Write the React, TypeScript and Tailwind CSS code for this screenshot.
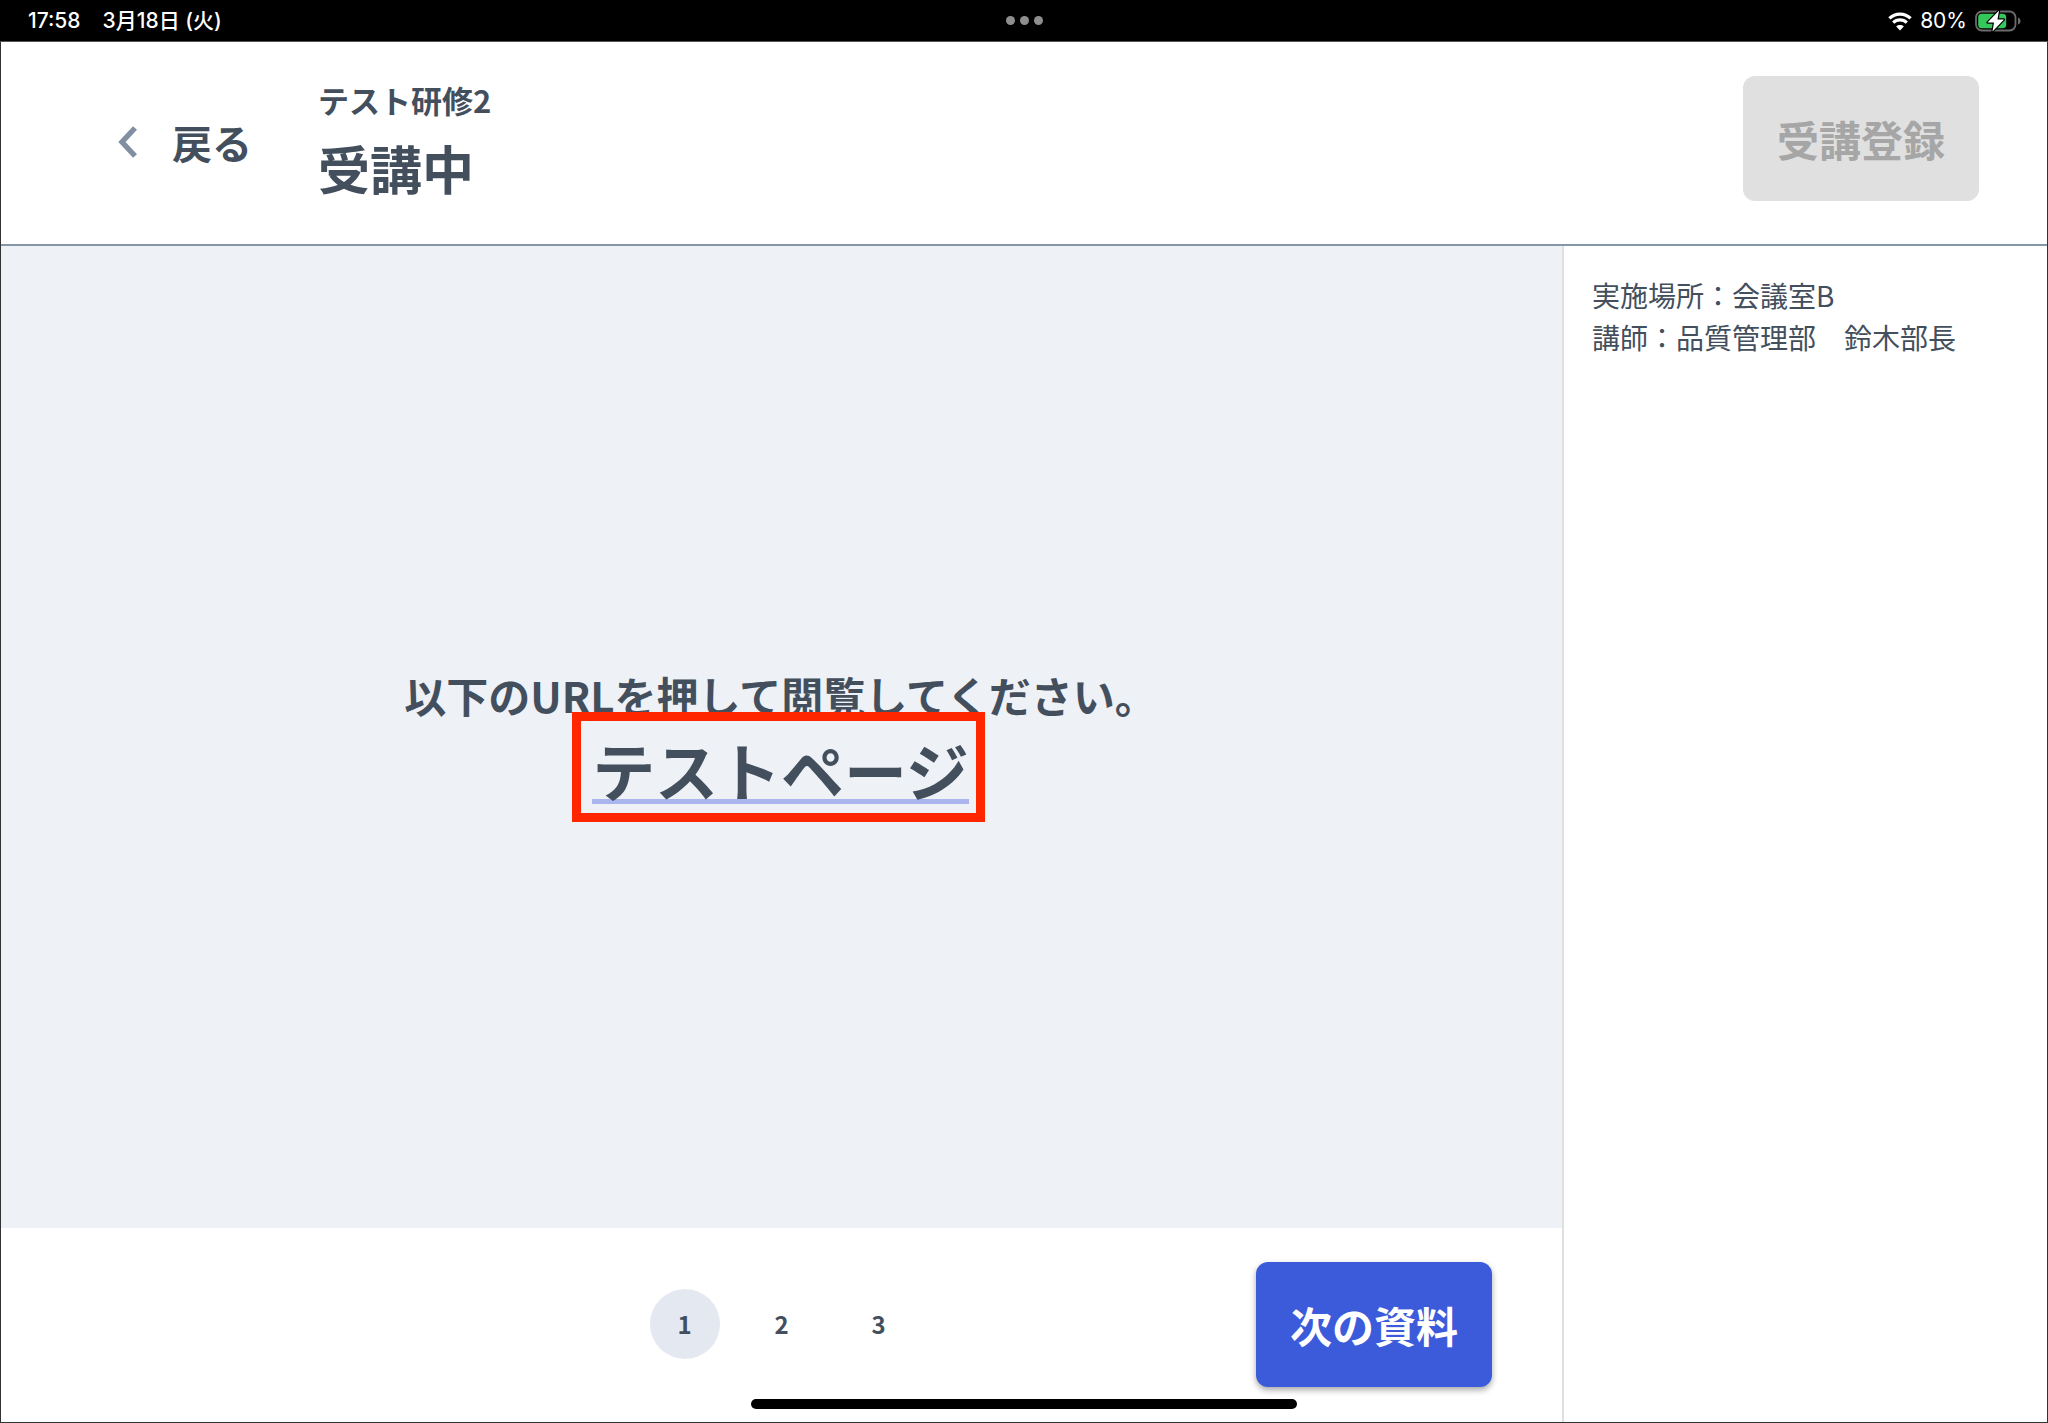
const PAGES = [1, 2, 3];
const CURRENT_PAGE = 1;

const WifiIcon = () => (
    <svg className="h-5 w-6" viewBox="0 0 24 20" fill="none" aria-hidden="true">
        <path d="M1.4 7.4C7.2 1.7 16.8 1.7 22.6 7.4" stroke="#fff" strokeWidth="3.2" />
        <path d="M5.2 11.6C9 8 15 8 18.8 11.6" stroke="#fff" strokeWidth="3.2" />
        <path d="M12 19.4L8.2 15.4C10.3 13.5 13.7 13.5 15.8 15.4Z" fill="#fff" />
    </svg>
);

const BatteryIcon = () => (
    <svg className="h-6 w-[46px]" viewBox="0 0 46 24" fill="none" aria-hidden="true">
        <rect x="1" y="2.5" width="39.5" height="19" rx="6" stroke="#6b6b6b" strokeWidth="1.8" />
        <path d="M43 8.5C46.4 9.5 46.4 14.5 43 15.5Z" fill="#6b6b6b" />
        <rect x="3.2" y="4.7" width="28" height="14.6" rx="3.5" fill="#34c759" />
        <path
            d="M24 1.5L12.5 13.5H19L17.5 22.5L29 10.5H22.5Z"
            fill="#fff"
            stroke="#000"
            strokeWidth="2.4"
            paintOrder="stroke"
            strokeLinejoin="round"
        />
    </svg>
);

const StatusBar = () => {
    return (
        <div className="grid grid-cols-[1fr_auto_1fr] items-center h-[42px] pl-[28px] pr-[27px] bg-black border-b border-[#555555] text-white text-[21px] font-['Inter','Noto_Sans_CJK_JP',sans-serif]">
            <div className="flex items-center gap-[22px] font-medium">
                <span>17:58</span>
                <span>3月18日 (火)</span>
            </div>
            <div className="flex gap-[5px]">
                <span className="size-[9px] rounded-full bg-[#8e8e8e]" />
                <span className="size-[9px] rounded-full bg-[#8e8e8e]" />
                <span className="size-[9px] rounded-full bg-[#8e8e8e]" />
            </div>
            <div className="flex items-center justify-end gap-2">
                <WifiIcon />
                <span>80%</span>
                <BatteryIcon />
            </div>
        </div>
    );
};

interface HeaderProps {
    course: string;
    status: string;
}

const Header = ({ course, status }: HeaderProps) => {
    return (
        <header className="flex items-center h-[204px] pl-[116px] pr-[68px] pb-[2px] bg-white border-b-2 border-[#8596a6]">
            <button type="button" className="flex items-center gap-[35px] text-[40px] leading-[60px] font-bold">
                <svg className="h-8 w-5" viewBox="0 0 20 32" fill="none" aria-hidden="true">
                    <path d="M18 2L5 16L18 30" stroke="#8090a2" strokeWidth="5.4" />
                </svg>
                戻る
            </button>
            <div className="ml-[66px] flex flex-col gap-[6px]">
                <p className="text-[31px] leading-[46px] font-bold">{course}</p>
                <h1 className="text-[52px] leading-[78px] font-bold">{status}</h1>
            </div>
            <button
                type="button"
                disabled
                className="ml-auto mb-2 h-[125px] px-[34px] rounded-xl bg-[#e0e0e0] text-[#a6a6a6] text-[42px] leading-[63px] font-bold"
            >
                受講登録
            </button>
        </header>
    );
};

const Slide = () => {
    return (
        <section className="flex-1 flex flex-col items-center justify-center gap-3 pb-2 pr-[2px] bg-[#eef1f6]">
            <p className="text-[42px] leading-[63px] font-bold">以下のURLを押して閲覧してください。</p>
            <a href="#test" className="relative border-b-5 border-[#a9b5ec] text-[63px] leading-[61px] font-bold">
                テストページ
                <span className="absolute -left-5 -right-4 -top-[26px] -bottom-[23px] border-9 border-[#ff2600]" />
            </a>
        </section>
    );
};

const Pager = () => {
    return (
        <nav className="grid grid-cols-[1fr_auto_1fr] items-center h-[194px] px-[70px] pb-[2px] bg-white">
            <div className="col-start-2 flex gap-[27px]">
                {PAGES.map((page) => (
                    <button
                        key={page}
                        type="button"
                        className={
                            page === CURRENT_PAGE
                                ? 'size-[70px] rounded-full bg-[#e4e9f1] text-2xl font-bold'
                                : 'size-[70px] rounded-full text-2xl font-bold'
                        }
                    >
                        {page}
                    </button>
                ))}
            </div>
            <button
                type="button"
                className="justify-self-end h-[125px] px-[34px] rounded-xl bg-[#3b5bdb] text-white text-[42px] leading-[63px] font-bold shadow-[0_3px_6px_rgba(0,0,0,0.35)]"
            >
                次の資料
            </button>
        </nav>
    );
};

const App = () => {
    return (
        <div className="relative min-h-screen flex flex-col bg-white text-[#434f5d] font-['Noto_Sans_CJK_JP',sans-serif]">
            <StatusBar />
            <div className="flex-1 flex flex-col border-x border-b border-[#333333]">
                <Header course="テスト研修2" status="受講中" />
                <div className="flex-1 flex">
                    <main className="flex-1 flex flex-col">
                        <Slide />
                        <Pager />
                    </main>
                    <aside className="w-[485px] border-l-2 border-[#e0e0e0] px-7 py-7 text-[28px] leading-[42px]">
                        <p>{'実施場所\uFF1A会議室B'}</p>
                        <p>{'講師\uFF1A品質管理部\u3000鈴木部長'}</p>
                    </aside>
                </div>
            </div>
            <div className="absolute bottom-[14px] left-1/2 -translate-x-1/2 w-[546px] h-[10px] rounded-full bg-black" />
        </div>
    );
};

export default App;
